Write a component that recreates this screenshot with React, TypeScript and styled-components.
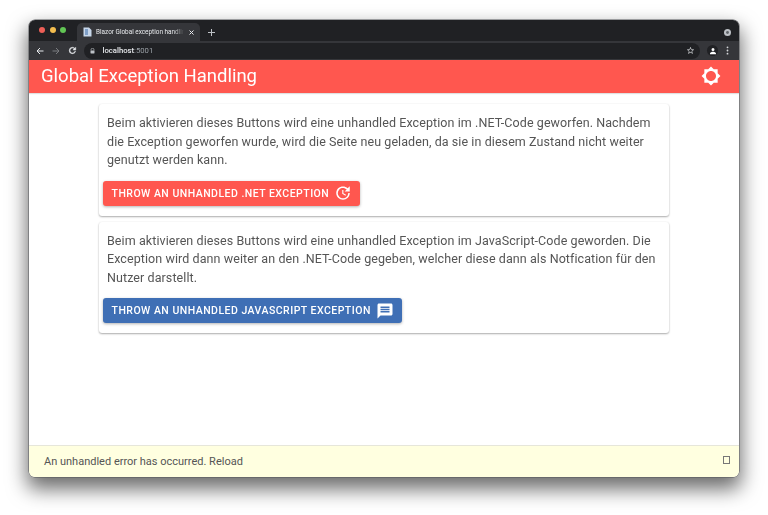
import React from "react";
import styled, { createGlobalStyle } from "styled-components";

const Global = createGlobalStyle`
  html, body { margin: 0; padding: 0; background: #fff; width: 768px; height: 515px; overflow: hidden; }
  * { box-sizing: border-box; }
`;

const Stage = styled.div`
  width: 768px;
  height: 515px;
  padding: 20px 29px 38px;
  font-family: Roboto, "Liberation Sans", sans-serif;
  filter: blur(0.35px);
`;

const Window = styled.div`
  height: 457px;
  display: flex;
  flex-direction: column;
  border-radius: 6px;
  overflow: hidden;
  background: #fff;
  box-shadow: 0 0 0 0.5px #55565a, 0 10px 20px 2px rgba(0, 0, 0, 0.58);
`;

const TabStrip = styled.div`
  height: 21px;
  flex: none;
  display: flex;
  align-items: flex-end;
  padding: 0 8px 0 10px;
  background: #202124;
`;

const Lights = styled.div`
  display: flex;
  gap: 4.5px;
  align-self: flex-start;
  margin-top: 7px;
  width: 38px;
`;

const Light = styled.span<{ $color: string }>`
  width: 6px;
  height: 6px;
  border-radius: 50%;
  background: ${(p) => p.$color};
`;

const Tab = styled.div`
  width: 123px;
  height: 18px;
  border-radius: 5px 5px 0 0;
  background: #35363a;
  display: flex;
  align-items: center;
  padding: 0 5px 0 6px;
  gap: 4px;
  color: #e8eaed;
  font: 6.4px Roboto, sans-serif;
`;

const TabTitle = styled.span`
  flex: 1;
  overflow: hidden;
  white-space: nowrap;
  -webkit-mask-image: linear-gradient(90deg, #000 88%, transparent);
  mask-image: linear-gradient(90deg, #000 88%, transparent);
`;

const Glyph = styled.svg`
  display: block;
  flex: none;
`;

const NewTab = styled.div`
  margin: 0 0 5.5px 8px;
  display: flex;
`;

const Spacer = styled.div`
  flex: 1;
`;

const StripEnd = styled.div`
  align-self: flex-start;
  margin-top: 8.5px;
  display: flex;
`;

const Toolbar = styled.div`
  height: 19px;
  flex: none;
  display: flex;
  align-items: center;
  padding: 0 9px 0 7px;
  gap: 8px;
  background: #35363a;
`;

const Omnibox = styled.div`
  height: 16px;
  width: 616px;
  margin-left: -1px;
  border-radius: 8px;
  background: #202124;
  display: flex;
  align-items: center;
  padding: 0 5px 0 6px;
  gap: 7.5px;
  font: 7.7px Roboto, sans-serif;
  color: #9aa0a6;
`;

const Host = styled.span`
  color: #e8eaed;
  font-weight: 500;
`;

const Url = styled.span`
  flex: 1;
`;

const Avatar = styled.div`
  width: 11px;
  height: 11px;
  margin-left: -1px;
  border-radius: 50%;
  background: #202124;
  display: flex;
  align-items: center;
  justify-content: center;
`;

const AppBar = styled.header`
  height: 33px;
  flex: none;
  display: flex;
  align-items: center;
  justify-content: space-between;
  padding: 0 18px 1px 12px;
  background: #ff574f;
  color: #fff;
  font-size: 18.5px;
  box-shadow: 0 1px 1px rgba(0, 0, 0, 0.12);
`;

const Main = styled.main`
  flex: 1;
  display: flex;
  flex-direction: column;
  gap: 6px;
  padding: 11px 70px 0;
`;

const Card = styled.section`
  padding: 10px 4px 10px;
  border-radius: 3px;
  background: #fff;
  box-shadow: 0 1px 2px rgba(0, 0, 0, 0.32), 0 0 2px rgba(0, 0, 0, 0.05);
`;

const Text = styled.p`
  margin: 0 4px 11px;
  color: #555;
  font-size: 12.5px;
  letter-spacing: 0.08px;
  line-height: 18.5px;
`;

const Button = styled.button<{ $bg: string }>`
  height: 25px;
  display: inline-flex;
  align-items: center;
  gap: 5px;
  padding: 0 8px 0 8.5px;
  border: 0;
  border-radius: 3px;
  background: ${(p) => p.$bg};
  color: #fff;
  font: 500 10.5px Roboto, sans-serif;
  letter-spacing: 0.48px;
  text-transform: uppercase;
  box-shadow: 0 1px 3px rgba(0, 0, 0, 0.3);
`;

const ErrorBar = styled.footer`
  height: 32px;
  flex: none;
  display: flex;
  align-items: center;
  justify-content: space-between;
  padding: 0 9px 0 15px;
  background: #ffffe0;
  border-top: 1px solid #e6e6da;
  color: #555;
  font-size: 11px;
`;

const Dismiss = styled.span`
  width: 7px;
  height: 8px;
  margin-top: -3px;
  border: 1px solid #777;
`;

export default function App() {
  return (
    <Stage>
      <Global />
      <Window>
        <TabStrip>
          <Lights>
            <Light $color="#ed5f57" />
            <Light $color="#f4bd4f" />
            <Light $color="#61c554" />
          </Lights>
          <Tab>
            <Glyph width="9" height="10" viewBox="0 0 9 10">
              <path d="M0.5 0.5h5.5l2.5 2.5v6.5h-8z" fill="#c8d7ea" />
              <path d="M2 2h3v6h-3z" fill="#5f88b8" opacity="0.7" />
            </Glyph>
            <TabTitle>Blazor Global exception handling</TabTitle>
            <Glyph width="7" height="7" viewBox="0 0 7 7">
              <path d="M1.5 1.5l4 4M5.5 1.5l-4 4" stroke="#e8eaed" strokeWidth="1" />
            </Glyph>
          </Tab>
          <NewTab>
            <Glyph width="7" height="7" viewBox="0 0 7 7">
              <path d="M3.5 0v7M0 3.5h7" stroke="#bdc1c6" strokeWidth="1" />
            </Glyph>
          </NewTab>
          <Spacer />
          <StripEnd>
            <Glyph width="7" height="7" viewBox="0 0 7 7">
              <circle cx="3.5" cy="3.5" r="3.5" fill="#bdc1c6" />
              <circle cx="3.5" cy="3.5" r="1.4" fill="#5f6368" />
            </Glyph>
          </StripEnd>
        </TabStrip>
        <Toolbar>
          <Glyph width="8" height="8" viewBox="0 0 8 8">
            <path d="M7.5 4H1M4 1L1 4l3 3" fill="none" stroke="#e8eaed" strokeWidth="1" />
          </Glyph>
          <Glyph width="8" height="8" viewBox="0 0 8 8">
            <path d="M.5 4H7M4 1l3 3-3 3" fill="none" stroke="#7a7c80" strokeWidth="1" />
          </Glyph>
          <Glyph width="9" height="9" viewBox="1 1 22 22">
            <path
              d="M17.65 6.35A7.96 7.96 0 0 0 12 4a8 8 0 1 0 7.73 10h-2.08A6 6 0 1 1 12 6c1.66 0 3.14.69 4.22 1.78L13 11h7V4l-2.35 2.35z"
              fill="#e8eaed"
              stroke="#e8eaed"
              strokeWidth="1"
            />
          </Glyph>
          <Omnibox>
            <Glyph width="5" height="6" viewBox="0 0 5 6">
              <path d="M1 2.5V1.8a1.5 1.5 0 0 1 3 0v.7" fill="none" stroke="#bdc1c6" strokeWidth=".7" />
              <rect x=".5" y="2.5" width="4" height="3" rx=".4" fill="#bdc1c6" />
            </Glyph>
            <Url>
              <Host>localhost</Host>:5001
            </Url>
            <Glyph width="9" height="9" viewBox="0 0 24 24">
              <path
                d="M22 9.24l-7.19-.62L12 2 9.19 8.63 2 9.24l5.46 4.73L5.82 21 12 17.27 18.18 21l-1.63-7.03L22 9.24zM12 15.4l-3.76 2.27 1-4.28-3.32-2.88 4.38-.38L12 6.1l1.71 4.04 4.38.38-3.32 2.88 1 4.28L12 15.4z"
                fill="#d5d7da"
              />
            </Glyph>
          </Omnibox>
          <Avatar>
            <Glyph width="8" height="8" viewBox="0 0 24 24">
              <path d="M12 12a4.5 4.5 0 1 0 0-9 4.5 4.5 0 0 0 0 9zm0 2.5c-3.3 0-9 1.7-9 5V22h18v-2.5c0-3.3-5.7-5-9-5z" fill="#fff" />
            </Glyph>
          </Avatar>
          <Glyph width="3" height="9" viewBox="0 0 3 9">
            <circle cx="1.5" cy="1.3" r=".9" fill="#d5d7da" />
            <circle cx="1.5" cy="4.5" r=".9" fill="#d5d7da" />
            <circle cx="1.5" cy="7.7" r=".9" fill="#d5d7da" />
          </Glyph>
        </Toolbar>
        <AppBar>
          Global Exception Handling
          <Glyph width="20" height="20" viewBox="0 0 24 24">
            <path
              d="M20 15.31L23.31 12 20 8.69V4h-4.69L12 .69 8.69 4H4v4.69L.69 12 4 15.31V20h4.69L12 23.31 15.31 20H20v-4.69zM12 18c-3.31 0-6-2.69-6-6s2.69-6 6-6 6 2.69 6 6-2.69 6-6 6z"
              fill="#fff"
            />
          </Glyph>
        </AppBar>
        <Main>
          <Card>
            <Text>
              Beim aktivieren dieses Buttons wird eine unhandled Exception im .NET-Code geworfen. Nachdem die Exception
              geworfen wurde, wird die Seite neu geladen, da sie in diesem Zustand nicht weiter genutzt werden kann.
            </Text>
            <Button $bg="#ff574f">
              Throw an unhandled .NET Exception
              <Glyph width="18" height="18" viewBox="0 0 24 24">
                <path
                  d="M21 10.12h-6.78l2.74-2.82c-2.73-2.7-7.15-2.8-9.88-.1-2.73 2.71-2.73 7.08 0 9.79s7.15 2.71 9.88 0C18.32 15.65 19 14.08 19 12.1h2c0 1.98-.88 4.55-2.64 6.29-3.51 3.48-9.21 3.48-12.72 0-3.5-3.47-3.53-9.11-.02-12.58s9.14-3.47 12.65 0L21 3v7.12zM12.5 8v4.25l3.5 2.08-.72 1.21L11 13V8h1.5z"
                  fill="#fff"
                />
              </Glyph>
            </Button>
          </Card>
          <Card>
            <Text>
              Beim aktivieren dieses Buttons wird eine unhandled Exception im JavaScript-Code geworden. Die Exception wird
              dann weiter an den .NET-Code gegeben, welcher diese dann als Notfication für den Nutzer darstellt.
            </Text>
            <Button $bg="#3f6fb5">
              Throw an unhandled JavaScript Exception
              <Glyph width="18" height="18" viewBox="0 0 24 24">
                <path
                  d="M20 2H4c-1.1 0-1.99.9-1.99 2L2 22l4-4h14c1.1 0 2-.9 2-2V4c0-1.1-.9-2-2-2zm-2 12H6v-2h12v2zm0-3H6V9h12v2zm0-3H6V6h12v2z"
                  fill="#fff"
                />
              </Glyph>
            </Button>
          </Card>
        </Main>
        <ErrorBar>
          An unhandled error has occurred. Reload
          <Dismiss />
        </ErrorBar>
      </Window>
    </Stage>
  );
}
